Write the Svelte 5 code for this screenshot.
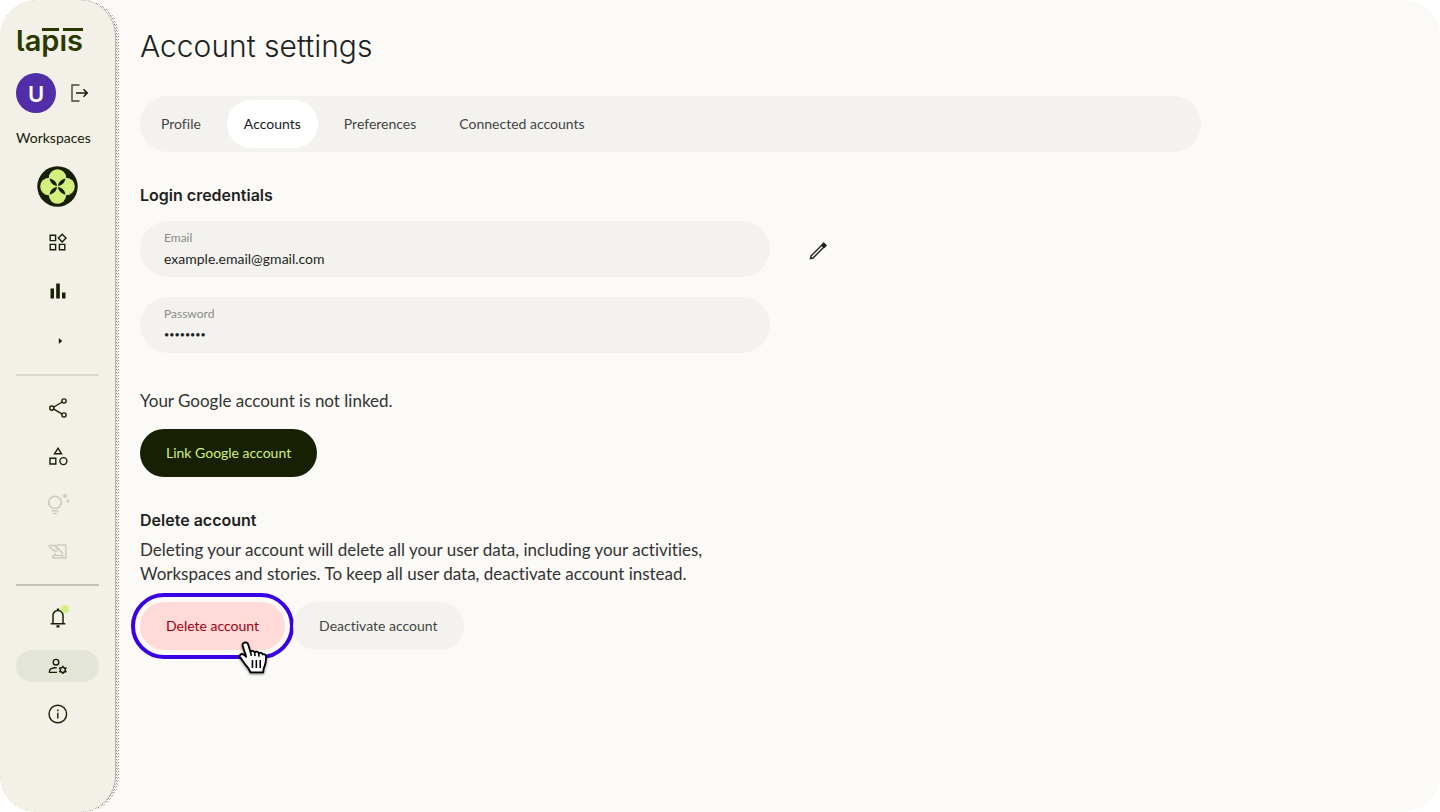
<script lang="ts">
  const tabs = ['Profile', 'Accounts', 'Preferences', 'Connected accounts'];
  let active = $state('Accounts');
  let email = $state('example.email@gmail.com');
  let password = $state('12345678');
</script>

<div class="app">
  <aside class="sidebar">
    <div class="logo" aria-label="lapis">la<span class="bar">p</span><span class="bar wide">ıs</span></div>
    <div class="user">
      <button class="avatar" aria-label="User">U</button>
      <button class="icon" aria-label="Log out">
        <svg width="24" height="24" viewBox="0 0 24 24" fill="none" stroke="currentColor" stroke-width="1.4"><path d="M12.5 4H5v16h7.5" stroke-opacity=".8" /><path d="M9 12h11M16.5 8.3 20.2 12l-3.7 3.7" stroke-width="1.6" /></svg>
      </button>
    </div>
    <div class="heading">Workspaces</div>
    <button class="workspace" aria-label="Workspace">
      <svg width="41" height="41" viewBox="0 0 42 42"><circle cx="21" cy="21" r="20.7" fill="#172003" /><g fill="#d3f07e"><circle cx="21" cy="12.2" r="8.9" /><circle cx="12.2" cy="21" r="8.9" /><circle cx="29.8" cy="21" r="8.9" /><circle cx="21" cy="29.8" r="8.9" /></g><g fill="#172003"><path d="M20.5 20.5C17 20.3 13.5 17.2 12.8 12.8 17.2 13.5 20.3 17 20.5 20.5Z" /><path d="M21.5 20.5C25 20.3 28.5 17.2 29.2 12.8 24.8 13.5 21.7 17 21.5 20.5Z" /><path d="M20.5 21.5C17 21.7 13.5 24.8 12.8 29.2 17.2 28.5 20.3 25 20.5 21.5Z" /><path d="M21.5 21.5C25 21.7 28.5 24.8 29.2 29.2 24.8 28.5 21.7 25 21.5 21.5Z" /></g></svg>
    </button>
    <nav>
      <button aria-label="Dashboard"><svg width="24" height="24" viewBox="0 0 24 24" fill="none" stroke="currentColor" stroke-width="1.4"><path d="M4.2 4.2h5.4v5.4H4.2zM4.2 13.4h5.4v5.4H4.2zM13.4 13.4h5.4v5.4h-5.4zM16.2 3.3l3.8 3.8-3.8 3.8-3.8-3.8z" /></svg></button>
      <button aria-label="Statistics"><svg width="24" height="24" viewBox="0 0 24 24" fill="currentColor"><path d="M4.5 9.5H8v10H4.5zM10.2 4.5h3.6v15h-3.6zM16 13.5h3.5v6H16z" /></svg></button>
      <button class="more" aria-label="Show more"><svg width="24" height="24" viewBox="0 0 24 24" fill="currentColor"><path d="M12.8 9 16.2 12l-3.4 3z" /></svg></button>
      <hr />
      <button aria-label="Share"><svg width="24" height="24" viewBox="0 0 24 24" fill="none" stroke="currentColor" stroke-width="1.4"><path d="m7.8 11 8.4-5M7.8 13.1l8.4 5" /><circle cx="5.8" cy="12.1" r="2.1" /><circle cx="18" cy="5" r="2.1" /><circle cx="18" cy="19" r="2.1" /></svg></button>
      <button aria-label="Categories"><svg width="24" height="24" viewBox="0 0 24 24" fill="none" stroke="currentColor" stroke-width="1.4"><path d="M12 4.2 15.5 9.8h-7zM4 14.3h5.8V20H4z" /><circle cx="17.4" cy="17.1" r="3.5" /></svg></button>
      <button aria-label="Ideas" disabled><svg width="24" height="24" viewBox="0 0 24 24" fill="none" stroke="currentColor" stroke-width="1.5"><path d="M6.2 16.2C4.2 15 2.7 13.1 2.7 10.6a6.3 6.3 0 0 1 12.6 0c0 2.5-1.5 4.4-3.5 5.6zM5.5 18.8h7M7.2 21.5h3.6" /><path d="M19 1.5v4.8M16.6 3.9h4.8M22 7.6v3M20.5 9.1h3" /></svg></button>
      <button aria-label="Stories" disabled><svg width="24" height="24" viewBox="0 0 24 24" fill="none" stroke="currentColor" stroke-width="1.5"><path d="M10.5 5.1h9.3v13H8c-2 0-2-2.5 0-2.5h8.500v2.500" /><path d="M3 5.500h6.500l7.500 8.200M3 5.500c.3 2 1.400 2.800 2.800 3 .1 1.400 1.300 2 2.600 1.800.3 1.100 1.400 1.300 3 .8M9 5.800l3.600 4.400M9 12.800v2.800" /></svg></button>
      <hr class="dark" />
      <button class="bell" aria-label="Notifications"><svg width="24" height="24" viewBox="0 0 24 24" fill="none" stroke="currentColor" stroke-width="1.5"><path d="M4.700 17.800h14.600M7 17.500V9.400a5 5 0 0 1 10 0v8.100" /><path d="M12 4.400V2.500M10.500 20.300h3" stroke-width="2.200" /></svg><span class="dot"></span></button>
      <button class="current" aria-label="Account settings"><svg width="24" height="24" viewBox="0 0 24 24" fill="none" stroke="currentColor" stroke-width="1.4"><circle cx="10" cy="8.2" r="2.8" /><path d="M11 18.400H3.500v-1.500c0-1.700 2.400-3.400 7.200-3.100" /><circle cx="16.8" cy="15.900" r="2.500" /><path d="M16.800 11.800v1.700M16.800 18.300V20M13.200 13.800l1.500.9M18.900 17.100l1.500.9M13.200 18l1.500-.9M18.900 14.700l1.500-.9" stroke-width="1.700" /></svg></button>
      <button aria-label="Information"><svg width="24" height="24" viewBox="0 0 24 24" fill="none" stroke="currentColor" stroke-width="1.4"><circle cx="11.800" cy="12" r="8.800" /><path d="M11.800 10.800v5.800M11.800 7.500v1.700" /></svg></button>
    </nav>
  </aside>

  <main>
    <h1>Account settings</h1>
    <div class="tabs" role="tablist">
      {#each tabs as tab}
        <button role="tab" aria-selected={tab === active} class:active={tab === active} onclick={() => (active = tab)}>{tab}</button>
      {/each}
    </div>

    <section>
      <h2>Login credentials</h2>
      <div class="credentials">
        <div class="fields">
          <label class="field"><span>Email</span><input type="text" bind:value={email} /></label>
          <label class="field"><span>Password</span><input type="password" bind:value={password} /></label>
        </div>
        <button class="edit" aria-label="Edit credentials">
          <svg width="24" height="24" viewBox="0 0 24 24" fill="none" stroke="currentColor" stroke-width="1.4"><path d="M5 17 17.500 4.500l2 2L7 19l-2.500.5z" /><path d="m15.800 6.200 2-2 2.200 2.200-2 2z" fill="currentColor" /></svg>
        </button>
      </div>
    </section>

    <section class="google">
      <p>Your Google account is not linked.</p>
      <button class="btn primary">Link Google account</button>
    </section>

    <section class="delete">
      <h2>Delete account</h2>
      <p>Deleting your account will delete all your user data, including your activities, Workspaces and stories. To keep all user data, deactivate account instead.</p>
      <div class="actions">
        <button class="btn danger">Delete account
          <svg class="hand" width="36" height="40" viewBox="0 0 32 36"><path d="M8.400 3.200c1.600-.5 2.800.4 3.300 2l2 6.500c.5-1.500 3.200-1.500 3.700.5.8-1.400 3.400-1 3.800.8 1-1.100 3.200-.5 3.500 1 1.200-.8 3 0 3 1.800 0 4-.2 6.400-1.500 9-.9 1.800-1 2.800-1 5.200H13.700c-.8-2.900-2.600-4.800-4.600-7-1.600-1.800-2.700-4.200-4.500-6.200-1.600-1.800.6-4.300 3-2.700l2.300 2L6.800 6.400c-.5-1.600.2-2.800 1.600-3.200Z" fill="#fff" stroke="#000" stroke-width="1.600" stroke-linejoin="round" /><path d="M13.700 11.700l.8 3.500M17.400 12.200l.5 3.300M21.200 13l.2 3M15.500 19v7M19 19v7M22.500 19v7" stroke="#000" stroke-width="1.400" /></svg>
        </button>
        <button class="btn">Deactivate account</button>
      </div>
    </section>
  </main>
</div>

<style>
  :global(body) { margin: 0; background: #fff; }
  * { box-sizing: border-box; }
  .app { display: flex; min-height: 100vh; background: #fbfaf6; border-radius: 36px; overflow: hidden; font-family: Lato, sans-serif; font-size: 14px; font-variant-ligatures: none; line-height: 20px; color: #1f1f1f; isolation: isolate; }
  button { border: 0; padding: 0; margin: 0; background: none; font: inherit; font-variant-ligatures: inherit; color: inherit; cursor: pointer; }
  svg { display: block; }
  .sidebar { position: relative; flex: none; display: flex; flex-direction: column; width: 116px; padding: 22px 16px; background: #f2f0e7; border-right: 1px solid #b5b4aa; border-radius: 36px; color: #172003; }
  .sidebar::before { content: ''; position: absolute; z-index: -1; inset: 0 -4px 0 0; border-radius: 36px; background: conic-gradient(at 1px 1px, transparent 75%, #90908a 0) 0 0 / 2px 3px, conic-gradient(at 1px 1px, transparent 75%, #b4b4ae 0) 1px 1px / 2px 3px, #fbfaf6; }
  .logo { height: 36px; font-family: Inter, sans-serif; font-feature-settings: 'cv05'; font-size: 29px; line-height: 38px; font-weight: 600; color: #2a3900; white-space: nowrap; }
  .bar { position: relative; }
  .bar::before { content: ''; position: absolute; left: 1px; right: 0; top: 5px; height: 3px; background: currentColor; }
  .bar.wide::before { left: 4px; }
  .user { display: flex; align-items: center; gap: 11px; margin-top: 15px; }
  .avatar { width: 40px; height: 40px; border-radius: 50%; background: #512da8; color: #fff; font-family: Inter, sans-serif; font-size: 22px; line-height: 42px; font-weight: 600; }
  .heading { margin-top: 15px; white-space: nowrap; }
  .workspace { align-self: center; margin-top: 18px; }
  nav { display: flex; flex-direction: column; gap: 16px; margin-top: 20px; }
  nav button { position: relative; display: flex; align-items: center; justify-content: center; height: 32px; border-radius: 16px; }
  nav .more { height: 35px; }
  nav .current { background: #e4e5d9; }
  nav button:disabled { color: #cbccc3; }
  hr { width: 100%; height: 2px; margin: 0; border: 0; background: #dad9d1; }
  hr.dark { background: #c2c2bb; }
  .dot { position: absolute; top: 3px; left: 45px; width: 8px; height: 8px; border-radius: 50%; background: #d3f07e; }
  main { flex: 1; min-width: 0; padding: 24px; }
  h1, h2 { font-family: Inter, sans-serif; }
  h1 { margin: 0; font-size: 30px; line-height: 44px; font-weight: 300; }
  .tabs { display: flex; gap: 9px; max-width: 1061px; margin-top: 28px; padding: 4px; border-radius: 28px; background: #f3f2ee; }
  .tabs button { height: 48px; padding: 0 17px; border-radius: 24px; color: #444; }
  .tabs .active { background: #fff; color: #1a1a1a; }
  section { margin-top: 31px; }
  h2 { margin: 0; font-size: 16px; line-height: 24px; font-weight: 600; }
  .credentials { display: flex; align-items: flex-start; gap: 36px; margin-top: 14px; }
  .fields { display: grid; gap: 20px; flex: 0 1 630px; }
  .field { display: flex; flex-direction: column; height: 56px; padding: 8px 24px; border-radius: 28px; background: #f3f2ee; }
  .field span { font-size: 12px; line-height: 18px; color: #8b8b87; }
  .field input { width: 100%; height: 24px; padding: 0; border: 0; outline: 0; background: none; font: inherit; color: inherit; }
  .field input[type='password'] { height: 28px; font-size: 9px; }
  .edit { margin-top: 18px; }
  p { margin: 0; font-size: 17px; line-height: 24px; color: #333; }
  .google { margin-top: 36px; }
  .btn { position: relative; height: 48px; padding: 0 26px; border-radius: 24px; background: #f3f2ee; color: #444; }
  .google .btn { margin-top: 16px; }
  .btn.primary { background: #172003; color: #d3f07e; }
  .btn.danger { background: #ffdad6; color: #a00010; outline: 4px solid #3a00e5; outline-offset: 5px; }
  .delete { max-width: 600px; }
  .delete p { margin-top: 6px; }
  .actions { display: flex; gap: 8px; margin-top: 16px; }
  .hand { position: absolute; right: 14px; top: 37px; z-index: 2; filter: drop-shadow(0 1px 1px #0008); }
</style>
